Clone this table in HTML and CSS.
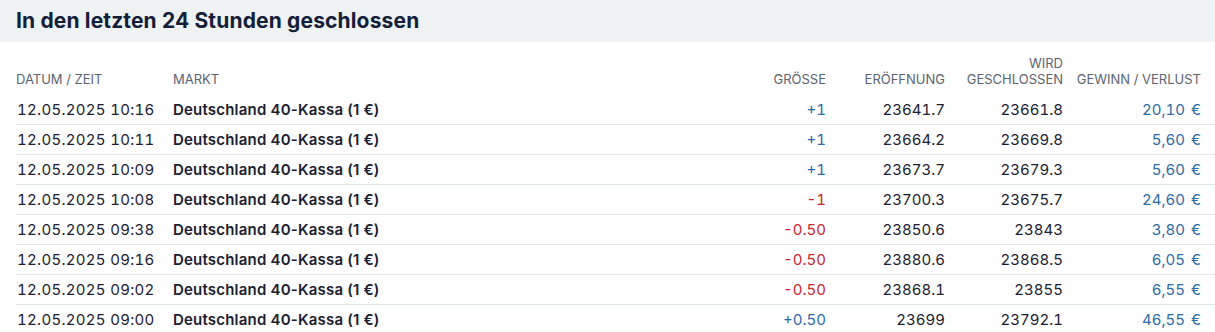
FILE: index.html
```html
<!DOCTYPE html>
<html lang="de">
<head>
<meta charset="utf-8">
<link rel="stylesheet" href="styles.css">
</head>
<body>
<div class="panel">
  <div class="title-bar"><h2 class="title">In den letzten 24 Stunden geschlossen</h2></div>
  <table class="trades">
    <colgroup>
      <col class="c-date"><col class="c-market"><col class="c-size"><col class="c-open"><col class="c-close"><col class="c-pl">
    </colgroup>
    <thead>
      <tr>
        <th class="left">DATUM / ZEIT</th>
        <th class="left">MARKT</th>
        <th>GRÖSSE</th>
        <th>ERÖFFNUNG</th>
        <th>WIRD<br>GESCHLOSSEN</th>
        <th class="last">GEWINN / VERLUST</th>
      </tr>
    </thead>
    <tbody>
      <tr><td class="left dt">12.05.2025 10:16</td><td class="left mk">Deutschland 40-Kassa (1 €)</td><td class="pos">+1</td><td>23641.7</td><td>23661.8</td><td class="pl last">20,10 €</td></tr>
      <tr><td class="left dt">12.05.2025 10:11</td><td class="left mk">Deutschland 40-Kassa (1 €)</td><td class="pos">+1</td><td>23664.2</td><td>23669.8</td><td class="pl last">5,60 €</td></tr>
      <tr><td class="left dt">12.05.2025 10:09</td><td class="left mk">Deutschland 40-Kassa (1 €)</td><td class="pos">+1</td><td>23673.7</td><td>23679.3</td><td class="pl last">5,60 €</td></tr>
      <tr><td class="left dt">12.05.2025 10:08</td><td class="left mk">Deutschland 40-Kassa (1 €)</td><td class="neg">-1</td><td>23700.3</td><td>23675.7</td><td class="pl last">24,60 €</td></tr>
      <tr><td class="left dt">12.05.2025 09:38</td><td class="left mk">Deutschland 40-Kassa (1 €)</td><td class="neg">-0.50</td><td>23850.6</td><td>23843</td><td class="pl last">3,80 €</td></tr>
      <tr><td class="left dt">12.05.2025 09:16</td><td class="left mk">Deutschland 40-Kassa (1 €)</td><td class="neg">-0.50</td><td>23880.6</td><td>23868.5</td><td class="pl last">6,05 €</td></tr>
      <tr><td class="left dt">12.05.2025 09:02</td><td class="left mk">Deutschland 40-Kassa (1 €)</td><td class="neg">-0.50</td><td>23868.1</td><td>23855</td><td class="pl last">6,55 €</td></tr>
      <tr><td class="left dt">12.05.2025 09:00</td><td class="left mk">Deutschland 40-Kassa (1 €)</td><td class="pos">+0.50</td><td>23699</td><td>23792.1</td><td class="pl last">46,55 €</td></tr>
    </tbody>
  </table>
</div>
</body>
</html>
```

FILE: styles.css
```css
html, body {
  margin: 0;
  padding: 0;
  background: #ffffff;
}
body {
  font-family: "Inter", "Liberation Sans", sans-serif;
  color: #1b2030;
}
.title-bar {
  background: #eef2f3;
  height: 41px;
  box-shadow: 0 1px 1px rgba(0,0,0,0.04);
  display: flex;
  align-items: center;
  padding: 0 16px;
}
.title {
  margin: 0;
  font-size: 21px;
  font-weight: 700;
  color: #14203a;
  letter-spacing: 0.15px;
}
.trades {
  margin: 14px 0 0 16px;
  width: 1199px;
  border-collapse: collapse;
  table-layout: fixed;
}
.c-date { width: 157px; }
.c-size { width: 90px; }
.c-open { width: 119px; }
.c-close { width: 118px; }
.c-pl { width: 152px; }
th {
  font-size: 13px;
  font-weight: 400;
  color: #5b6470;
  line-height: 16px;
  text-align: right;
  vertical-align: bottom;
  padding: 0 0 8px 0;
}
td {
  font-size: 15px;
  height: 29px;
  padding: 0;
  text-align: right;
  border-bottom: 1px solid #e1e8e8;
  line-height: 20px;
  font-variant-numeric: tabular-nums;
}
.left { text-align: left; }
.dt { padding-left: 1px; letter-spacing: 0.3px; }
.last { padding-right: 14px; }
.mk { font-weight: 600; font-variant-numeric: normal; letter-spacing: 0.2px; }
.pos { color: #2d6aa6; }
.neg { color: #c8262f; }
.pl { color: #2d6aa6; word-spacing: 2px; }
```
